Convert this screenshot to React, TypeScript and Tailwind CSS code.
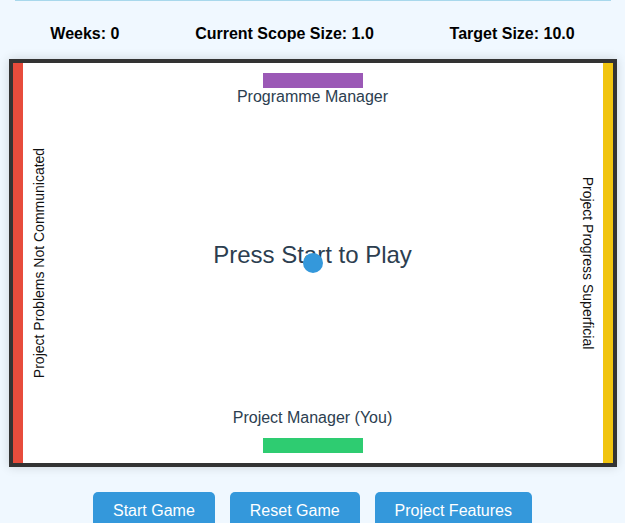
import type { ReactNode } from "react";

function Stat({ children }: { children: ReactNode }) {
  return <div className="text-[16px] font-bold leading-[18px] text-black">{children}</div>;
}

function Paddle({ color, top }: { color: string; top: string }) {
  return <div className={`absolute left-[250px] h-[15px] w-[100px] ${top} ${color}`} />;
}

function GameButton({ children }: { children: ReactNode }) {
  return (
    <button className="rounded-[5px] bg-[#3498db] px-5 py-2.5 text-[16px] leading-[18px] text-white">
      {children}
    </button>
  );
}

export default function App() {
  return (
    <div className="min-h-screen overflow-hidden bg-[#f0f8ff] font-['Liberation_Sans',Arial,sans-serif]">
      <div className="ml-[15px] h-px w-[596px] bg-[#a8d8ec]" />

      <div className="mx-auto mt-[24px] flex w-[600px] justify-around">
        <Stat>Weeks: 0</Stat>
        <Stat>Current Scope Size: 1.0</Stat>
        <Stat>Target Size: 10.0</Stat>
      </div>

      <div className="mx-auto mt-[16px] w-[608px] border-4 border-[#333] bg-white shadow-[0_0_10px_rgba(0,0,0,0.15)]">
        <div className="relative flex h-[400px] w-[600px]">
          <div className="w-[10px] bg-[#e74c3c]" />
          <div className="flex-1" />
          <div className="w-[10px] bg-[#f1c40f]" />

          <Paddle color="bg-[#9b59b6]" top="top-[10px]" />
          <div className="absolute left-0 top-[25px] w-[600px] text-center text-[16px] leading-[18px] text-[#2c3e50]">
            Programme Manager
          </div>

          <div className="absolute left-0 top-[178px] w-[600px] text-center text-[24px] leading-[28px] text-[#2c3e50]">
            Press Start to Play
          </div>
          <div className="absolute left-[290px] top-[190px] h-[20px] w-[20px] rounded-full bg-[#3498db]" />

          <div className="absolute left-[26px] top-[200px] -translate-x-1/2 -translate-y-1/2 -rotate-90 whitespace-nowrap text-[14px] leading-[16px] text-[#111]">
            Project Problems Not Communicated
          </div>
          <div className="absolute left-[575px] top-[200px] -translate-x-1/2 -translate-y-1/2 rotate-90 whitespace-nowrap text-[14px] leading-[16px] text-[#111]">
            Project Progress Superficial
          </div>

          <div className="absolute left-0 top-[346px] w-[600px] text-center text-[16px] leading-[18px] text-[#2c3e50]">
            Project Manager (You)
          </div>
          <Paddle color="bg-[#2ecc71]" top="top-[375px]" />
        </div>
      </div>

      <div className="mt-[25px] flex justify-center gap-[15px]">
        <GameButton>Start Game</GameButton>
        <GameButton>Reset Game</GameButton>
        <GameButton>Project Features</GameButton>
      </div>
    </div>
  );
}
